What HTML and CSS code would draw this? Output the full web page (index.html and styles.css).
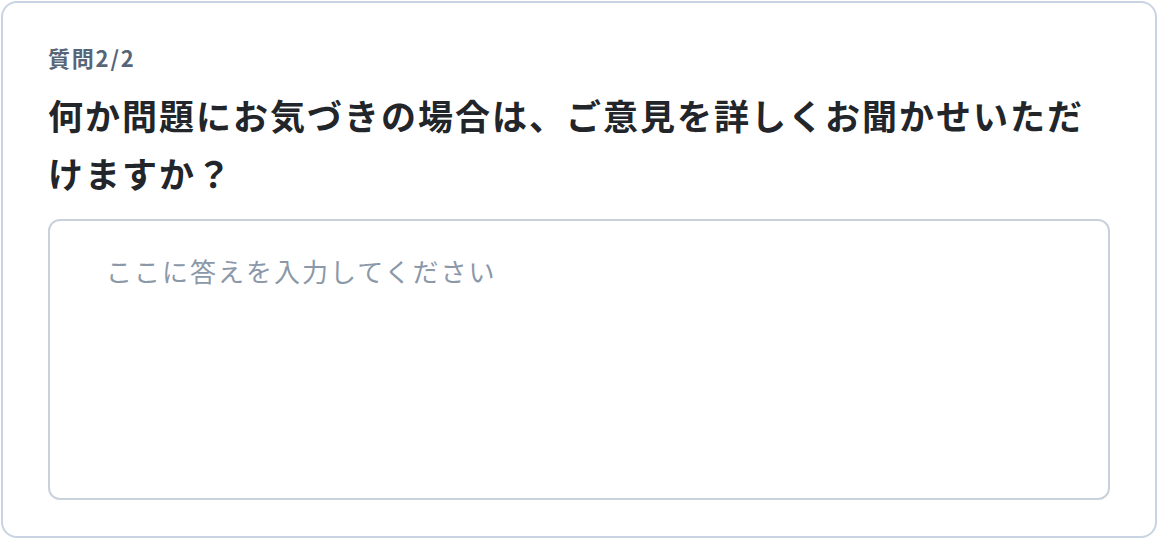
FILE: index.html
```html
<!DOCTYPE html>
<html lang="ja">
<head>
<meta charset="utf-8">
<link rel="stylesheet" href="styles.css">
</head>
<body>
<div class="card">
  <div class="label">質問2/2</div>
  <h1 class="title">何か問題にお気づきの場合は、ご意見を詳しくお聞かせいただけますか？</h1>
  <textarea class="answer" placeholder="ここに答えを入力してください"></textarea>
</div>
</body>
</html>
```
FILE: styles.css
```css
html, body {
  margin: 0;
  padding: 0;
  background: #ffffff;
}
body {
  width: 1158px;
  height: 539px;
  box-sizing: border-box;
  padding: 1px;
  font-family: "Noto Sans CJK JP", "Noto Sans", sans-serif;
}
.card {
  box-sizing: border-box;
  height: 537px;
  border: 2px solid #c8d4e3;
  border-radius: 16px;
  padding: 39px 45px 28px 45px;
  display: flex;
  flex-direction: column;
}
.label {
  font-size: 22px;
  font-weight: 700;
  color: #566577;
  line-height: 30px;
  letter-spacing: 1.8px;
}
.title {
  margin: 14px 0 17px 0;
  font-size: 35px;
  font-weight: 700;
  color: #222529;
  line-height: 58px;
  letter-spacing: 2px;
}
.answer {
  flex-shrink: 0;
  box-sizing: border-box;
  width: 100%;
  height: 281px;
  border: 2px solid #c9d2dc;
  border-radius: 12px;
  padding: 32px 56px 30px 56px;
  font-family: "Noto Sans CJK JP", "Noto Sans", sans-serif;
  font-size: 26px;
  line-height: 36px;
  letter-spacing: 2px;
  color: #222529;
  resize: none;
  outline: none;
  background: #ffffff;
}
.answer::placeholder {
  color: #8b98a8;
  opacity: 1;
}
```
